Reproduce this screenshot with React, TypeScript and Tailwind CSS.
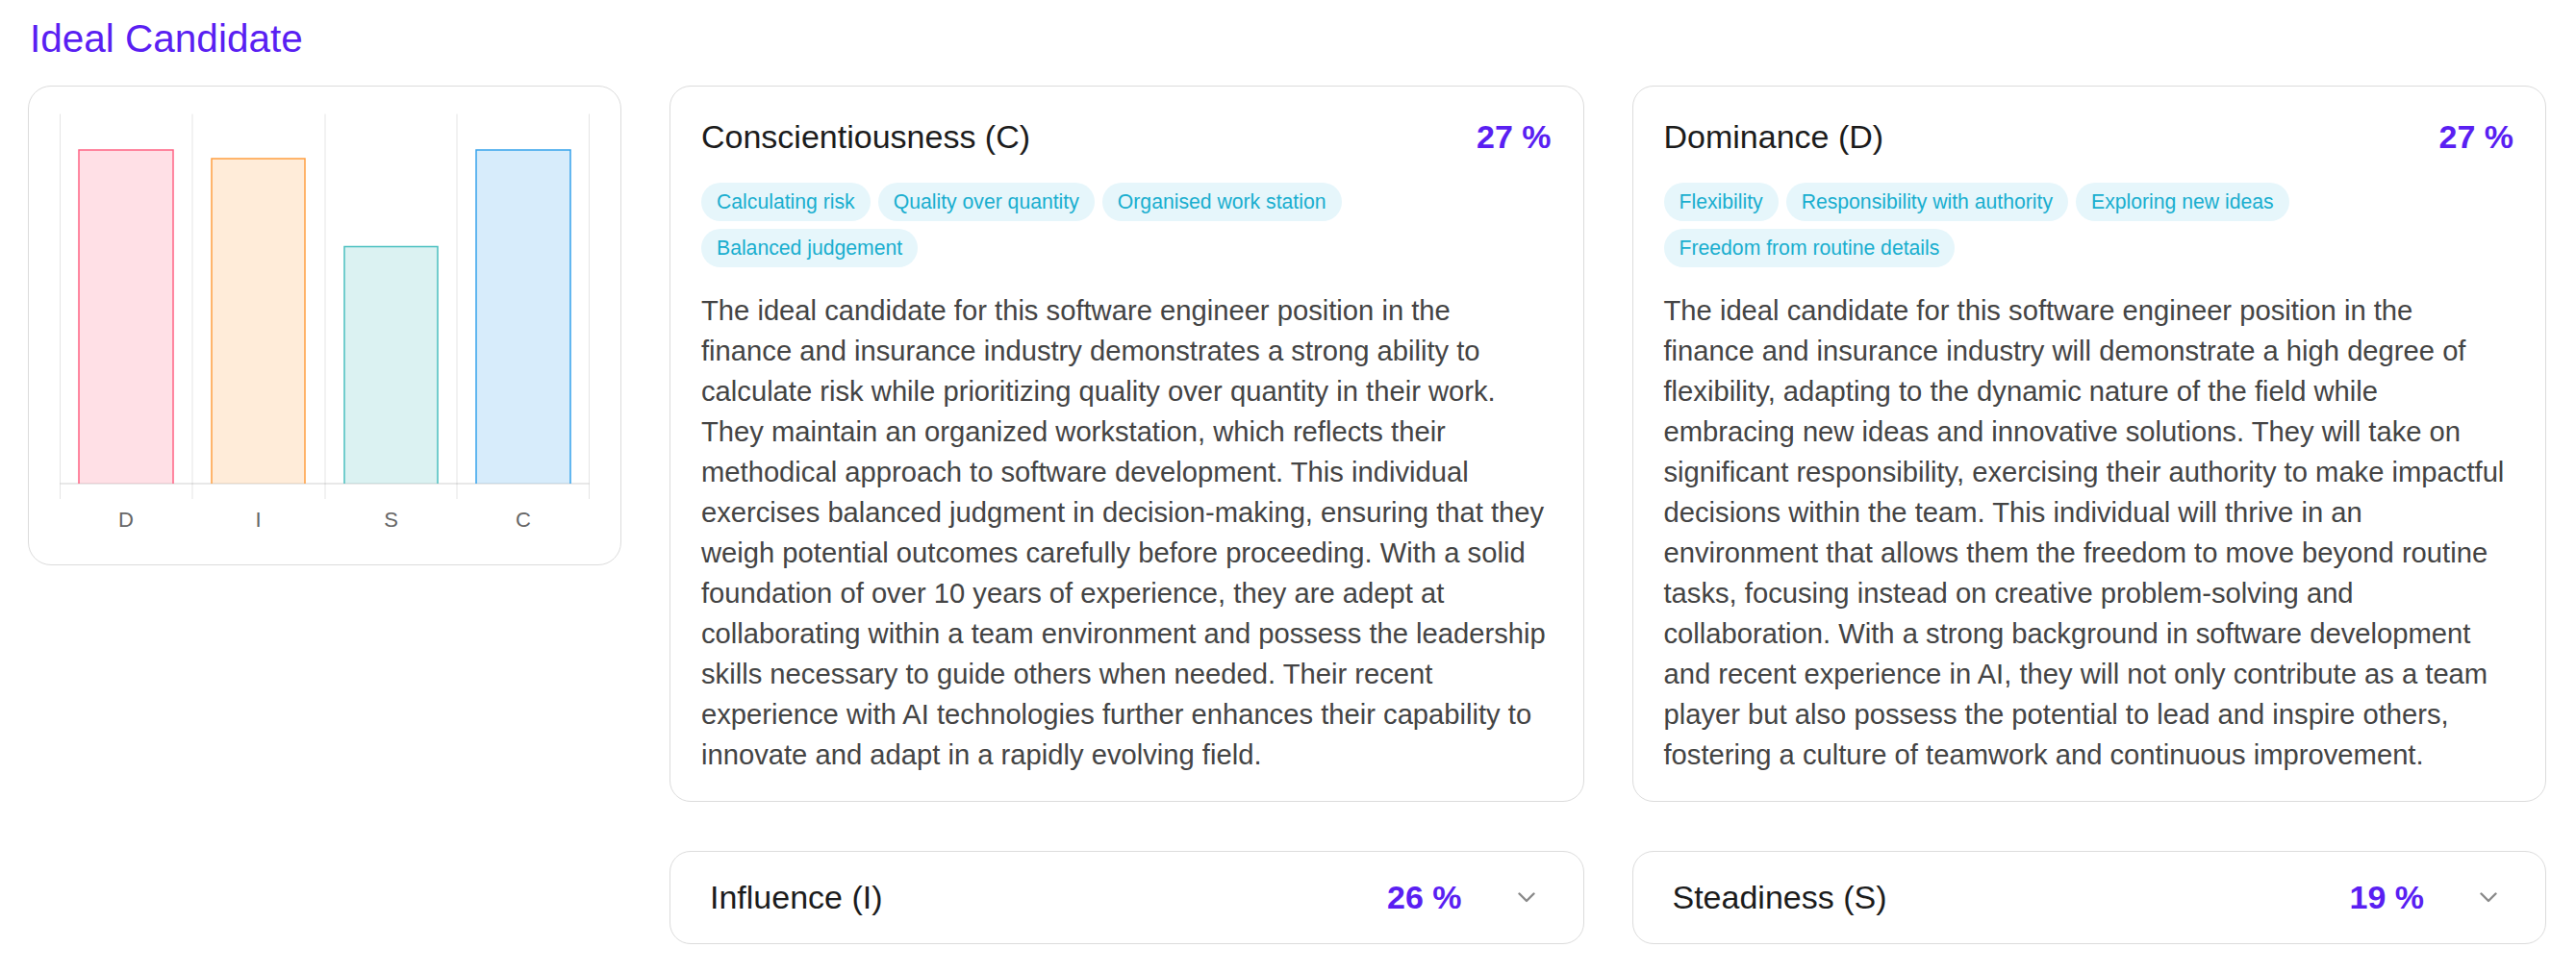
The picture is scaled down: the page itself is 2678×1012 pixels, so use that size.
import React from "react";

const bars = [
  { label: "D", x: 52, w: 98, top: 66, stroke: "rgb(255,99,132)", fill: "rgba(255,99,132,0.2)" },
  { label: "I", x: 190, w: 97, top: 75, stroke: "rgb(255,159,64)", fill: "rgba(255,159,64,0.2)" },
  { label: "S", x: 328, w: 97, top: 166.5, stroke: "rgb(75,192,192)", fill: "rgba(75,192,192,0.2)" },
  { label: "C", x: 465, w: 98, top: 66, stroke: "rgb(54,162,235)", fill: "rgba(54,162,235,0.2)" },
];

const gridX = [32.5, 170, 308, 445, 582.5];
const axisY = 413;

type Trait = {
  title: string;
  percent: string;
  chips: string[];
  lines: string[];
};

const expanded: Trait[] = [
  {
    title: "Conscientiousness (C)",
    percent: "27 %",
    chips: ["Calculating risk", "Quality over quantity", "Organised work station", "Balanced judgement"],
    lines: [
      "The ideal candidate for this software engineer position in the",
      "finance and insurance industry demonstrates a strong ability to",
      "calculate risk while prioritizing quality over quantity in their work.",
      "They maintain an organized workstation, which reflects their",
      "methodical approach to software development. This individual",
      "exercises balanced judgment in decision-making, ensuring that they",
      "weigh potential outcomes carefully before proceeding. With a solid",
      "foundation of over 10 years of experience, they are adept at",
      "collaborating within a team environment and possess the leadership",
      "skills necessary to guide others when needed. Their recent",
      "experience with AI technologies further enhances their capability to",
      "innovate and adapt in a rapidly evolving field.",
    ],
  },
  {
    title: "Dominance (D)",
    percent: "27 %",
    chips: ["Flexibility", "Responsibility with authority", "Exploring new ideas", "Freedom from routine details"],
    lines: [
      "The ideal candidate for this software engineer position in the",
      "finance and insurance industry will demonstrate a high degree of",
      "flexibility, adapting to the dynamic nature of the field while",
      "embracing new ideas and innovative solutions. They will take on",
      "significant responsibility, exercising their authority to make impactful",
      "decisions within the team. This individual will thrive in an",
      "environment that allows them the freedom to move beyond routine",
      "tasks, focusing instead on creative problem-solving and",
      "collaboration. With a strong background in software development",
      "and recent experience in AI, they will not only contribute as a team",
      "player but also possess the potential to lead and inspire others,",
      "fostering a culture of teamwork and continuous improvement.",
    ],
  },
];

const collapsed = [
  { title: "Influence (I)", percent: "26 %" },
  { title: "Steadiness (S)", percent: "19 %" },
];

function DiscChart() {
  return (
    <div className="h-[499px] rounded-[24px] border border-[#dcdcdc] bg-white overflow-hidden">
      <svg width="615" height="497" viewBox="0 0 615 497">
        {gridX.map((x) => (
          <line key={x} x1={x} x2={x} y1={28.5} y2={429} stroke="rgba(0,0,0,0.1)" strokeWidth="1" />
        ))}
        <line x1={32.5} x2={582.5} y1={axisY} y2={axisY} stroke="rgba(0,0,0,0.12)" strokeWidth="1.5" />
        {bars.map((b) => (
          <g key={b.label}>
            <rect x={b.x} y={b.top} width={b.w} height={axisY - b.top} fill={b.fill} />
            <path
              d={`M${b.x} ${axisY} V${b.top} H${b.x + b.w} V${axisY}`}
              fill="none"
              stroke={b.stroke}
              strokeWidth="1.5"
            />
            <text
              x={b.x + b.w / 2}
              y={458}
              textAnchor="middle"
              fontSize="22"
              fill="#666"
              fontFamily="'Liberation Sans', Arial, sans-serif"
            >
              {b.label}
            </text>
          </g>
        ))}
      </svg>
    </div>
  );
}

function TraitCard({ t }: { t: Trait }) {
  return (
    <div className="rounded-[22px] border border-[#dcdcdc] bg-white pt-[32px] pb-[27px] pl-[32px] pr-[33px]">
      <div className="flex items-center justify-between h-[40px] leading-[40px]">
        <span className="text-[34px] text-[#1c1c1c]">{t.title}</span>
        <span className="text-[34px] font-bold text-[#5a1ff2]">{t.percent}</span>
      </div>
      <div className="mt-[28px] flex flex-wrap gap-[8px]">
        {t.chips.map((c) => (
          <span key={c} className="h-[40px] px-[16px] rounded-full bg-[#e6f6fb] text-[21.2px] text-[#19aecf] flex items-center">
            {c}
          </span>
        ))}
      </div>
      <p className="mt-[24px] text-[29.2px] leading-[42px] text-[#444444] whitespace-nowrap">
        {t.lines.map((l, i) => (
          <React.Fragment key={i}>
            {l}
            {i < t.lines.length - 1 && <br />}
          </React.Fragment>
        ))}
      </p>
    </div>
  );
}

function CollapsedCard({ title, percent }: { title: string; percent: string }) {
  return (
    <div className="h-[97px] rounded-[22px] border border-[#dcdcdc] bg-white flex items-center pl-[41px] pr-[50px]">
      <span className="flex-1 text-[34px] text-[#1c1c1c]">{title}</span>
      <span className="text-[34px] font-bold text-[#5a1ff2]">{percent}</span>
      <svg className="ml-[58px]" width="18" height="11" viewBox="0 0 18 11">
        <path d="M1.5 1.5 L9 9 L16.5 1.5" fill="none" stroke="#8a8a8a" strokeWidth="2.4" strokeLinecap="round" strokeLinejoin="round" />
      </svg>
    </div>
  );
}

export default function App() {
  return (
    <div className="min-h-screen bg-white font-['Liberation_Sans',Arial,sans-serif] pt-[16px] pl-[29px] pr-[31px]">
      <h1 className="pl-[2px] text-[40.5px] leading-[48px] text-[#5a1ff2]">Ideal Candidate</h1>
      <div className="mt-[25px] grid grid-cols-[617px_1fr_1fr] gap-x-[50px] gap-y-[51px] items-start">
        <DiscChart />
        {expanded.map((t) => (
          <TraitCard key={t.title} t={t} />
        ))}
        <div className="col-start-2">
          <CollapsedCard {...collapsed[0]} />
        </div>
        <CollapsedCard {...collapsed[1]} />
      </div>
    </div>
  );
}
